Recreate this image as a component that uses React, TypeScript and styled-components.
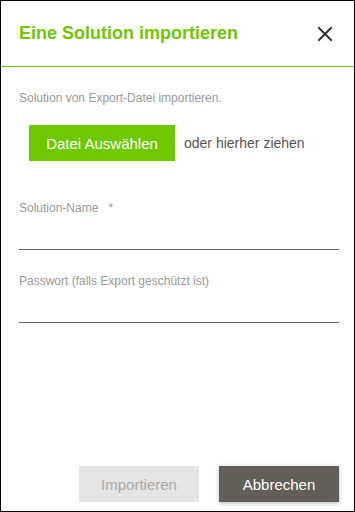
import React from 'react'
import styled, { createGlobalStyle } from 'styled-components'

const GlobalStyle = createGlobalStyle`
  html, body {
    margin: 0;
    padding: 0;
    background: #ffffff;
  }

  body {
    font-family: 'Liberation Sans', Arial, sans-serif;
  }

  * {
    box-sizing: border-box;
  }
`

const Dialog = styled.div`
  width: 355px;
  height: 512px;
  border: 1px solid #000000;
  background: #ffffff;
  display: flex;
  flex-direction: column;
`

const Header = styled.div`
  height: 66px;
  display: flex;
  align-items: center;
  justify-content: space-between;
  padding: 0 17px 0 18px;
  border-bottom: 1px solid #6ec800;
`

const Title = styled.h1`
  margin: 0;
  font-size: 18px;
  font-weight: 700;
  color: #6ec800;
`

const CloseButton = styled.button`
  border: none;
  background: none;
  padding: 0;
  width: 24px;
  height: 24px;
  display: flex;
  align-items: center;
  justify-content: center;
  color: #333333;
  cursor: pointer;
`

const Body = styled.div`
  flex: 1;
  display: flex;
  flex-direction: column;
  padding: 24px 15px 0 18px;
`

const Hint = styled.p`
  margin: 0;
  font-size: 12px;
  color: #999999;
  line-height: 14px;
`

const UploadRow = styled.div`
  display: flex;
  align-items: center;
  gap: 9px;
  margin-top: 20px;
  padding-left: 10px;
`

const UploadButton = styled.button`
  height: 36px;
  width: 146px;
  border: none;
  background: #6ec800;
  color: #ffffff;
  font-family: inherit;
  font-size: 15px;
  cursor: pointer;
`

const DropText = styled.span`
  font-size: 14px;
  color: #555555;
`

const Field = styled.label<{ $first?: boolean }>`
  display: flex;
  flex-direction: column;
  margin-top: ${(p) => (p.$first ? '40px' : '24px')};
`

const FieldLabel = styled.span`
  font-size: 12px;
  color: #999999;
  line-height: 14px;
`

const Required = styled.span`
  margin-left: 10px;
`

const Input = styled.input`
  border: none;
  border-bottom: 1px solid #666666;
  height: 35px;
  padding: 0;
  font-family: inherit;
  font-size: 14px;
  outline: none;
  background: transparent;
`

const Footer = styled.div`
  display: flex;
  justify-content: flex-end;
  gap: 20px;
  padding: 0 15px 9px 0;
`

const FooterButton = styled.button<{ $primary?: boolean }>`
  width: 120px;
  height: 36px;
  border: none;
  font-family: inherit;
  font-size: 15px;
  background: ${(p) => (p.$primary ? '#625f5a' : '#e5e5e5')};
  color: ${(p) => (p.$primary ? '#ffffff' : '#aaaaaa')};
  box-shadow: ${(p) => (p.$primary ? '0 1px 4px rgba(0, 0, 0, 0.3)' : 'none')};
  cursor: pointer;
`

export default function App() {
  return (
    <>
      <GlobalStyle />
      <Dialog>
        <Header>
          <Title>Eine Solution importieren</Title>
          <CloseButton aria-label="Schließen">
            <svg width="16" height="16" viewBox="0 0 16 16">
              <path
                d="M2 2 L14 14 M14 2 L2 14"
                stroke="currentColor"
                strokeWidth="2"
                strokeLinecap="square"
              />
            </svg>
          </CloseButton>
        </Header>

        <Body>
          <Hint>Solution von Export-Datei importieren.</Hint>

          <UploadRow>
            <UploadButton>Datei Auswählen</UploadButton>
            <DropText>oder hierher ziehen</DropText>
          </UploadRow>

          <Field $first>
            <FieldLabel>
              Solution-Name<Required>*</Required>
            </FieldLabel>
            <Input type="text" />
          </Field>

          <Field>
            <FieldLabel>Passwort (falls Export geschützt ist)</FieldLabel>
            <Input type="password" />
          </Field>
        </Body>

        <Footer>
          <FooterButton disabled>Importieren</FooterButton>
          <FooterButton $primary>Abbrechen</FooterButton>
        </Footer>
      </Dialog>
    </>
  )
}
